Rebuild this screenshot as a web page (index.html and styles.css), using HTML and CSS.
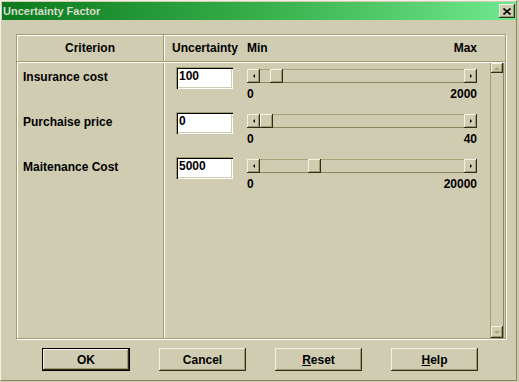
FILE: index.html
```html
<!DOCTYPE html>
<html lang="en">
<head>
    <meta charset="UTF-8">
    <title>Uncertainty Factor</title>
    <link rel="stylesheet" href="styles.css">
</head>
<body>

<div class="window">
    <div class="titlebar">
        <span class="title">Uncertainty Factor</span>
        <span class="close">
            <svg width="8" height="7" viewBox="0 0 8 7"><path d="M0.5 0.5 L7.5 6.5 M7.5 0.5 L0.5 6.5" stroke="#000" stroke-width="1.6" fill="none"/></svg>
        </span>
    </div>

    <div class="frame">
        <div class="head">
            <div class="h-crit">Criterion</div>
            <div class="h-unc">Uncertainty</div>
            <div class="h-range"><span>Min</span><span>Max</span></div>
        </div>

        <div class="body">
            <div class="crit-col">
                <div class="label">Insurance cost</div>
                <div class="label">Purchaise price</div>
                <div class="label">Maitenance Cost</div>
            </div>

            <div class="fields">
                <div class="row">
                    <input class="unc" type="text" value="100">
                    <div class="range">
                        <div class="slider">
                            <span class="arrow-btn"><span class="tri-left"></span></span>
                            <span class="track"><span class="thumb" style="--pos: 0.05"></span></span>
                            <span class="arrow-btn"><span class="tri-right"></span></span>
                        </div>
                        <div class="scale"><span>0</span><span>2000</span></div>
                    </div>
                </div>
                <div class="row">
                    <input class="unc" type="text" value="0">
                    <div class="range">
                        <div class="slider">
                            <span class="arrow-btn"><span class="tri-left"></span></span>
                            <span class="track"><span class="thumb" style="--pos: 0"></span></span>
                            <span class="arrow-btn"><span class="tri-right"></span></span>
                        </div>
                        <div class="scale"><span>0</span><span>40</span></div>
                    </div>
                </div>
                <div class="row">
                    <input class="unc" type="text" value="5000">
                    <div class="range">
                        <div class="slider">
                            <span class="arrow-btn"><span class="tri-left"></span></span>
                            <span class="track"><span class="thumb" style="--pos: 0.25"></span></span>
                            <span class="arrow-btn"><span class="tri-right"></span></span>
                        </div>
                        <div class="scale"><span>0</span><span>20000</span></div>
                    </div>
                </div>
            </div>

            <div class="vscroll">
                <span class="scroll-btn up"><span class="tri-up"></span></span>
                <span class="scroll-track"></span>
                <span class="scroll-btn down"><span class="tri-down"></span></span>
            </div>
        </div>
    </div>

    <div class="buttons">
        <button class="btn default">OK</button>
        <button class="btn">Cancel</button>
        <button class="btn"><u>R</u>eset</button>
        <button class="btn"><u>H</u>elp</button>
    </div>
</div>

</body>
</html>
```

FILE: styles.css
```css
body {
    margin: 0;
    background: #d0ccb2;
    font: bold 12px "Liberation Sans", Arial, sans-serif;
    color: #000;
}

.window {
    width: 517px;
    height: 381px;
    box-sizing: border-box;
    border-top: 1px solid #f4f2e6;
    border-left: 1px solid #f4f2e6;
    border-right: 1px solid #8c8960;
    border-bottom: 1px solid #8c8960;
    padding: 1px 0 0 1px;
}

.titlebar {
    height: 18px;
    display: flex;
    align-items: center;
    justify-content: space-between;
    padding-left: 1px;
    background: linear-gradient(to right, #0c7a1c, #3cb450 55%, #70e88e);
}

.title {
    color: #d8dccc;
    font-size: 11px;
}

.close {
    width: 16px;
    height: 14px;
    margin-right: 1px;
    display: flex;
    align-items: center;
    justify-content: center;
    background: #d0ccb2;
    box-shadow: inset -1px -1px #2e2e20, inset 1px 1px #f4f2e6, inset -2px -2px #9d9a6b;
}

.close svg {
    display: block;
}

/* etched group frame */
.frame {
    margin: 14px 0 0 14px;
    width: 490px;
    height: 305px;
    box-sizing: border-box;
    border: 1px solid #a09c6c;
    box-shadow: 1px 1px 0 #fff, inset 1px 1px 0 #fff;
    display: flex;
    flex-direction: column;
}

.head {
    display: flex;
    height: 26px;
    flex-shrink: 0;
    border-bottom: 1px solid #a09c6c;
}

.h-crit {
    width: 146px;
    border-right: 1px solid #a09c6c;
    display: flex;
    align-items: center;
    justify-content: center;
}

.h-unc {
    width: 75px;
    border-left: 1px solid #fff;
    padding-left: 7px;
    display: flex;
    align-items: center;
}

.h-range {
    width: 230px;
    display: flex;
    align-items: center;
    justify-content: space-between;
}

.body {
    flex: 1;
    display: flex;
    border-top: 1px solid #fff;
}

.crit-col {
    width: 146px;
    border-right: 1px solid #a09c6c;
}

.label {
    height: 45px;
    box-sizing: border-box;
    padding: 7px 0 0 6px;
    line-height: 14px;
}

.fields {
    width: 325px;
    border-left: 1px solid #fff;
}

.row {
    height: 45px;
    box-sizing: border-box;
    padding-top: 4px;
    display: flex;
    align-items: flex-start;
}

.unc {
    width: 57px;
    height: 22px;
    margin: 0 0 0 11px;
    box-sizing: border-box;
    border: none;
    padding: 0 3px 5px;
    background: #fff;
    box-shadow: inset 1px 1px #a09c6c, inset 2px 2px #000, inset -1px -1px #fff, inset -2px -2px #d0ccb2;
    font: inherit;
    color: #000;
    outline: none;
}

.range {
    width: 230px;
    margin-left: 14px;
    padding-top: 2px;
}

.slider {
    display: flex;
    height: 14px;
}

.arrow-btn,
.thumb,
.scroll-btn {
    box-sizing: border-box;
    background: #d0ccb2;
    box-shadow: inset -1px -1px #2e2e20, inset 1px 1px #f4f2e6, inset -2px -2px #9d9a6b;
}

.arrow-btn {
    width: 13px;
    height: 14px;
    display: flex;
    align-items: center;
    justify-content: center;
}

.track {
    flex: 1;
    box-sizing: border-box;
    border-top: 1px solid #a8a47a;
    border-bottom: 1px solid #8c8960;
}

.thumb {
    display: block;
    width: 13px;
    height: 14px;
    margin-top: -1px;
    margin-left: calc(var(--pos) * (100% - 13px));
}

.tri-left,
.tri-right {
    width: 0;
    height: 0;
    border-top: 2px solid transparent;
    border-bottom: 2px solid transparent;
}

.tri-left {
    border-right: 2px solid #000;
}

.tri-right {
    border-left: 2px solid #000;
}

.scale {
    display: flex;
    justify-content: space-between;
    margin-top: 4px;
    line-height: 14px;
}

.vscroll {
    width: 12px;
    border-left: 1px solid #a09c6c;
    border-right: 1px solid #8c8960;
    display: flex;
    flex-direction: column;
}

.scroll-btn {
    height: 12px;
    display: flex;
    align-items: center;
    justify-content: center;
}

.scroll-btn.up {
    height: 10px;
}

.scroll-track {
    flex: 1;
}

.tri-up,
.tri-down {
    width: 0;
    height: 0;
    border-left: 3px solid transparent;
    border-right: 3px solid transparent;
}

.tri-up {
    border-bottom: 3px solid #a8a47a;
}

.tri-down {
    border-top: 3px solid #a8a47a;
}

.buttons {
    display: flex;
    gap: 29px;
    margin: 9px 0 0 40px;
}

.btn {
    width: 87px;
    height: 23px;
    box-sizing: border-box;
    border: none;
    padding: 0;
    background: #d0ccb2;
    box-shadow: inset -1px -1px #2e2e20, inset 1px 1px #f4f2e6, inset -2px -2px #9d9a6b;
    font: inherit;
    color: #000;
}

.btn.default {
    width: 88px;
    border: 1px solid #000;
}
```
